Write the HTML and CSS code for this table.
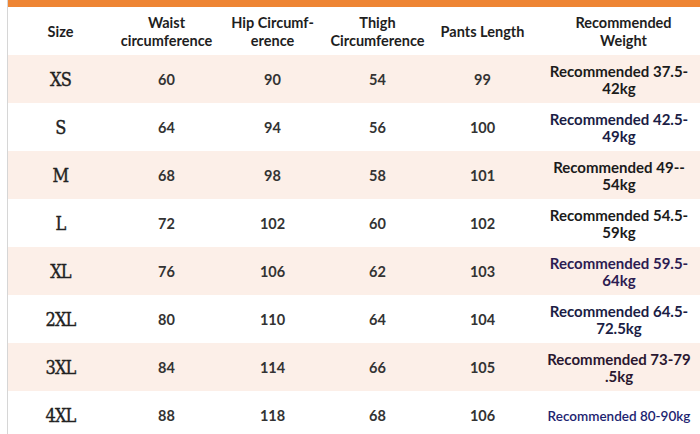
FILE: index.html
```html
<!DOCTYPE html>
<html>
<head>
<meta charset="utf-8">
<link rel="stylesheet" href="styles.css">
</head>
<body>
<div class="sheet">
  <div class="topbar"></div>
  <div class="row head">
    <div class="cell">Size</div>
    <div class="cell">Waist<br>circumference</div>
    <div class="cell">Hip Circumf-<br>erence</div>
    <div class="cell">Thigh<br>Circumference</div>
    <div class="cell">Pants Length</div>
    <div class="cell weight-head">Recommended<br>Weight</div>
  </div>
  <div class="row alt">
    <div class="cell size">XS</div><div class="cell num">60</div><div class="cell num">90</div><div class="cell num">54</div><div class="cell num">99</div>
    <div class="cell rec c1">Recommended 37.5-<br>42kg</div>
  </div>
  <div class="row">
    <div class="cell size">S</div><div class="cell num">64</div><div class="cell num">94</div><div class="cell num">56</div><div class="cell num">100</div>
    <div class="cell rec c2">Recommended 42.5-<br>49kg</div>
  </div>
  <div class="row alt">
    <div class="cell size">M</div><div class="cell num">68</div><div class="cell num">98</div><div class="cell num">58</div><div class="cell num">101</div>
    <div class="cell rec c1">Recommended 49--<br>54kg</div>
  </div>
  <div class="row">
    <div class="cell size">L</div><div class="cell num">72</div><div class="cell num">102</div><div class="cell num">60</div><div class="cell num">102</div>
    <div class="cell rec c1">Recommended 54.5-<br>59kg</div>
  </div>
  <div class="row alt">
    <div class="cell size">XL</div><div class="cell num">76</div><div class="cell num">106</div><div class="cell num">62</div><div class="cell num">103</div>
    <div class="cell rec c3">Recommended 59.5-<br>64kg</div>
  </div>
  <div class="row">
    <div class="cell size">2XL</div><div class="cell num">80</div><div class="cell num">110</div><div class="cell num">64</div><div class="cell num">104</div>
    <div class="cell rec c2">Recommended 64.5-<br>72.5kg</div>
  </div>
  <div class="row alt">
    <div class="cell size">3XL</div><div class="cell num">84</div><div class="cell num">114</div><div class="cell num">66</div><div class="cell num">105</div>
    <div class="cell rec c4">Recommended 73-79<br>.5kg</div>
  </div>
  <div class="row">
    <div class="cell size">4XL</div><div class="cell num">88</div><div class="cell num">118</div><div class="cell num">68</div><div class="cell num">106</div>
    <div class="cell rec small">Recommended 80-90kg</div>
  </div>
</div>
</body>
</html>
```

FILE: styles.css
```css
html, body {
  margin: 0;
  padding: 0;
  background: #ffffff;
}
body {
  width: 700px;
  height: 434px;
  overflow: hidden;
  font-family: Lato, "Liberation Sans", sans-serif;
}
.sheet {
  margin-left: 7px;
  border-left: 1px solid #d6d6d6;
  height: 434px;
}
.topbar {
  height: 7px;
  background: #ee8534;
}
.row {
  display: grid;
  grid-template-columns: 105px 107px 105px 105px 105px 1fr;
  height: 48px;
  align-items: center;
}
.row.alt {
  background: #fcefe8;
}
.cell {
  text-align: center;
  font-weight: 700;
  font-size: 14.5px;
  line-height: 18px;
  color: #222;
  padding-top: 2px;
}
.head .cell {
  color: #1e1e1e;
}
.weight-head {
  padding-left: 12px;
}
.num {
  color: #333;
}
.size {
  font-family: "DejaVu Serif", "Liberation Serif", serif;
  font-stretch: condensed;
  font-weight: 400;
  font-size: 18px;
  color: #222;
  letter-spacing: -0.8px;
  -webkit-text-stroke: 0.35px #222;
}
.rec {
  font-size: 15px;
  line-height: 17px;
  padding-left: 3px;
}
.c1 { color: #1b1b1b; }
.c2 { color: #1b1d45; }
.c3 { color: #2c1c52; }
.c4 { color: #2a1730; }
.small {
  font-size: 13.5px;
  font-weight: 600;
  color: #1d2470;
}
```
